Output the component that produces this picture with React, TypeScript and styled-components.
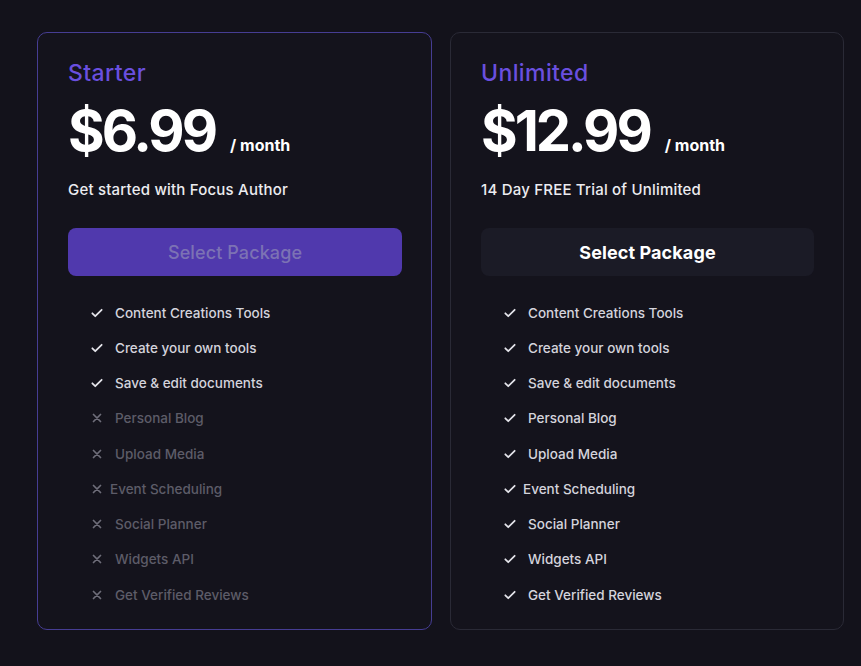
import React from "react";
import styled, { createGlobalStyle } from "styled-components";

const Global = createGlobalStyle`
  html, body { margin: 0; padding: 0; background: #13121b; }
  body { font-family: Inter, "Open Sans", sans-serif; -webkit-font-smoothing: antialiased; }
`;

const Page = styled.div`
  min-height: 666px;
  box-sizing: border-box;
  padding: 32px 18px 36px 37px;
  display: grid;
  grid-template-columns: 395px 394px;
  gap: 18px;
`;

const Card = styled.div<{ $featured?: boolean }>`
  box-sizing: border-box;
  height: 598px;
  border: 1px solid ${(p) => (p.$featured ? "#463d93" : "#2a2a36")};
  border-radius: 10px;
  background: #14131c;
  padding: 26px 29px 0 30px;
  display: flex;
  flex-direction: column;
`;

const Title = styled.div`
  color: #6a4fdf;
  font-size: 23px;
  font-weight: 500;
  letter-spacing: 0.4px;
  line-height: 28px;
`;

const PriceRow = styled.div`
  display: flex;
  align-items: baseline;
  margin-top: 14px;
  height: 60px;
`;

const Price = styled.span`
  color: #ffffff;
  font-size: 56px;
  font-weight: 700;
  letter-spacing: -3px;
  line-height: 60px;
`;

const Per = styled.span`
  color: #ffffff;
  font-size: 16px;
  font-weight: 700;
  margin-left: 15px;
`;

const Subtitle = styled.div`
  color: #ececf0;
  font-size: 15px;
  font-weight: 500;
  letter-spacing: 0.2px;
  margin-top: 19px;
  line-height: 20px;
`;

const Button = styled.button<{ $primary?: boolean }>`
  margin-top: 28px;
  height: 48px;
  width: 100%;
  border: none;
  border-radius: 8px;
  font-family: inherit;
  font-size: 18px;
  font-weight: ${(p) => (p.$primary ? 500 : 700)};
  letter-spacing: 0.1px;
  background: ${(p) => (p.$primary ? "#5039ad" : "#1b1b26")};
  color: ${(p) => (p.$primary ? "#7c72b4" : "#ffffff")};
  cursor: pointer;
`;

const List = styled.ul`
  list-style: none;
  margin: 19px 0 0;
  padding: 0 0 0 22px;
  display: flex;
  flex-direction: column;
`;

const Item = styled.li<{ $off?: boolean; $tight?: boolean }>`
  display: flex;
  align-items: center;
  height: 35.25px;
  font-size: 13.5px;
  font-weight: 500;
  color: ${(p) => (p.$off ? "#5d5c68" : "#d4d4dc")};
  svg {
    flex: none;
    margin-right: ${(p) => (p.$tight ? "6px" : "11px")};
  }
`;

const CheckIcon = () => (
  <svg width="14" height="14" viewBox="0 0 24 24" fill="none" stroke="#e4e4ea" strokeWidth="3" strokeLinecap="round" strokeLinejoin="round">
    <path d="M4 12.5l5 5L20 6.5" />
  </svg>
);

const XIcon = () => (
  <svg width="14" height="14" viewBox="0 0 24 24" fill="none" stroke="#6e6d79" strokeWidth="3" strokeLinecap="round">
    <path d="M6 6l12 12M18 6L6 18" />
  </svg>
);

const features = [
  "Content Creations Tools",
  "Create your own tools",
  "Save & edit documents",
  "Personal Blog",
  "Upload Media",
  "Event Scheduling",
  "Social Planner",
  "Widgets API",
  "Get Verified Reviews",
];

type Plan = {
  name: string;
  price: string;
  sub: string;
  featured: boolean;
  included: number;
};

const plans: Plan[] = [
  { name: "Starter", price: "$6.99", sub: "Get started with Focus Author", featured: true, included: 3 },
  { name: "Unlimited", price: "$12.99", sub: "14 Day FREE Trial of Unlimited", featured: false, included: 9 },
];

export default function App() {
  return (
    <>
      <Global />
      <Page>
        {plans.map((p) => (
          <Card key={p.name} $featured={p.featured}>
            <Title>{p.name}</Title>
            <PriceRow>
              <Price>{p.price}</Price>
              <Per>/ month</Per>
            </PriceRow>
            <Subtitle>{p.sub}</Subtitle>
            <Button $primary={p.featured}>Select Package</Button>
            <List>
              {features.map((f, i) => {
                const on = i < p.included;
                return (
                  <Item key={f} $off={!on} $tight={f === "Event Scheduling"}>
                    {on ? <CheckIcon /> : <XIcon />}
                    {f}
                  </Item>
                );
              })}
            </List>
          </Card>
        ))}
      </Page>
    </>
  );
}
